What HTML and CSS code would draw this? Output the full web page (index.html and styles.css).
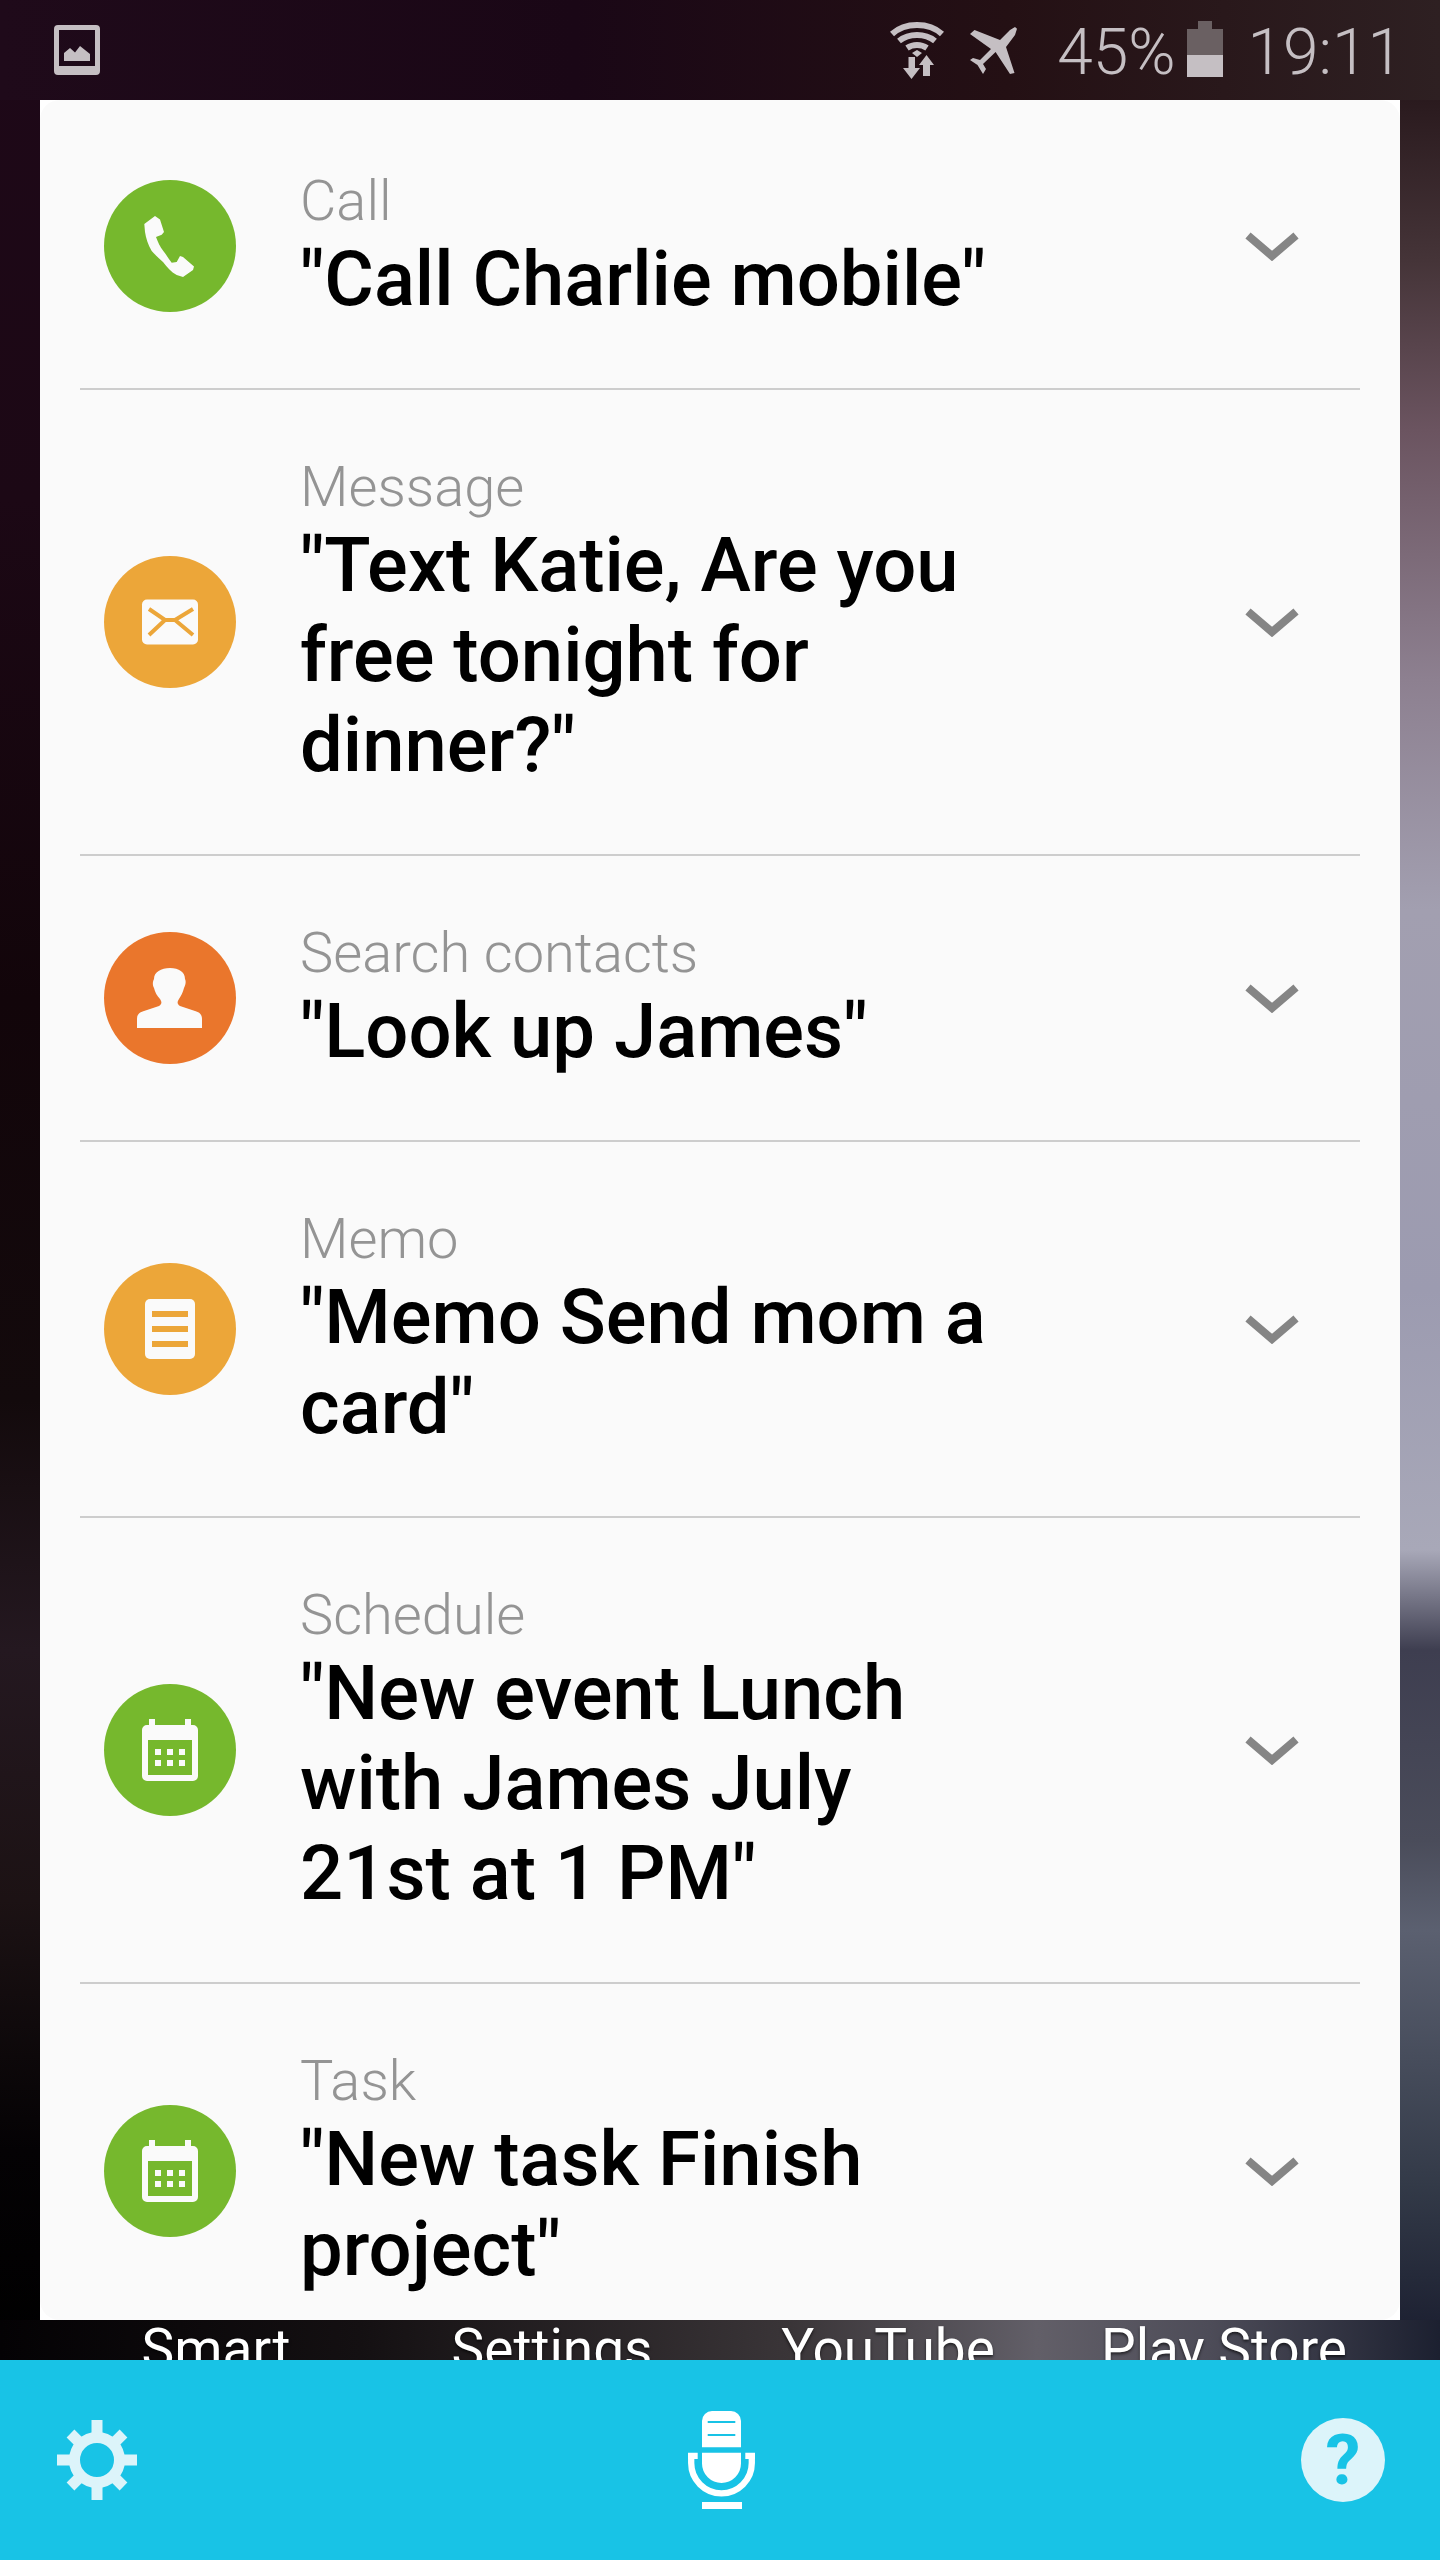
FILE: index.html
```html
<!DOCTYPE html>
<html lang="en">
<head>
    <meta charset="UTF-8">
    <meta name="viewport" content="width=device-width, initial-scale=1.0">
    <title>Voice commands</title>
    <link rel="stylesheet" href="styles.css">
</head>
<body>
    <svg class="defs" width="0" height="0">
        <symbol id="calendar" viewBox="0 0 132 132">
            <path fill="#fafafa" d="M45 35h6v6h30v-6h6v6h2a5 5 0 0 1 5 5v46a5 5 0 0 1-5 5H43a5 5 0 0 1-5-5V46a5 5 0 0 1 5-5h2z"/>
            <rect x="44" y="56" width="44" height="35" fill="#76b82d"/>
            <path fill="#fafafa" d="M51 65h6v6h-6zM63 65h6v6h-6zM75 65h6v6h-6zM51 76h6v6h-6zM63 76h6v6h-6zM75 76h6v6h-6z"/>
        </symbol>
        <symbol id="chevron" viewBox="0 0 54 29">
            <path d="M3 3.500 27 24 51 3.500" fill="none" stroke="#858585" stroke-width="8"/>
        </symbol>
    </svg>

    <div class="screen">
        <div class="status-bar">
            <svg class="status-image" width="46" height="50" viewBox="0 0 46 50">
                <path fill="#c5bfc3" fill-rule="evenodd" d="M4 0h38a4 4 0 0 1 4 4v42a4 4 0 0 1-4 4H4a4 4 0 0 1-4-4V4a4 4 0 0 1 4-4zM5 5v36h36V5z"/>
                <path fill="#c5bfc3" d="M10 36v-8l6-5 5 4.500 5-6.500 10 8v7z"/>
            </svg>
            <div class="status-right">
                <svg class="wifi" width="54" height="60" viewBox="0 0 54 60">
                    <path fill="none" stroke="#c5bfc3" stroke-width="6" d="M2 14C15 2 39 2 52 14M9 21c10-8 26-8 36 0M17 28c6-4 14-4 20 0"/>
                    <path fill="#c5bfc3" d="M22 33l5-3 5 3-5 4zM18.500 37H25v11h5l-8.500 11L13 48h5.500zM33 56V45h-4l7.500-10L44 45h-4v11z"/>
                </svg>
                <svg class="plane" width="48" height="48" viewBox="0 0 48 48">
                    <path fill="#c5bfc3" d="M48 1.700 46 8 37 20 45.500 46 41 47 26.600 25 14 37 17 42 14 47 8.500 38 1 33 4 31 11 33 22 22 1 7 5.500 3 31 13 41 3 46 0z"/>
                </svg>
                <span class="percent">45%</span>
                <svg class="battery" width="36" height="56" viewBox="0 0 36 56">
                    <path fill="#6a6062" d="M11 0h14v8h11v26H0V8h11z"/>
                    <rect y="34" width="36" height="22" fill="#c5bfc3"/>
                </svg>
                <span class="clock">19:11</span>
            </div>
        </div>

        <div class="card">
            <div class="row">
                <svg class="row-icon" viewBox="0 0 132 132">
                    <circle cx="66" cy="66" r="66" fill="#76b82d"/>
                    <path fill="#fafafa" d="M51 36l5 3.500L60 52l-2.300 2.800L52 57c2 5 4 10 7.300 14s5.400 8 8.400 11.700l5-.700L76 76l3 1 11 9.600L89 90l-10 6.900L72.700 95C67 92 63 87 59 82 55 78 51 75 47.700 71 44 65 42 58 41 52l-.700-8z"/>
                </svg>
                <div class="row-text">
                    <div class="row-label">Call</div>
                    <div class="row-command">"Call Charlie mobile"</div>
                </div>
                <svg class="chevron"><use href="#chevron"/></svg>
            </div>

            <div class="row">
                <svg class="row-icon" viewBox="0 0 132 132">
                    <circle cx="66" cy="66" r="66" fill="#eca639"/>
                    <rect x="38" y="43.500" width="56" height="45" rx="5" fill="#fafafa"/>
                    <path fill="none" stroke="#eca639" stroke-width="4" d="M45 53l16 11h10l18-11M45 79l16-15M71 64l18 15"/>
                </svg>
                <div class="row-text">
                    <div class="row-label">Message</div>
                    <div class="row-command">"Text Katie, Are you free tonight for dinner?"</div>
                </div>
                <svg class="chevron"><use href="#chevron"/></svg>
            </div>

            <div class="row">
                <svg class="row-icon" viewBox="0 0 132 132">
                    <circle cx="66" cy="66" r="66" fill="#ea762c"/>
                    <path fill="#fafafa" d="M33 96v-9c0-5 3-7 7-8l15-5c3-2 3-4 1-7-3-3-5-7-6-11-2-4-1-7 0-9 0-7 7-11 16-11s15 4 15 11c1 2 1 5-1 9-1 4-3 8-5 11-2 3-2 5 1 7l15 5c4 1 7 3 7 8v9z"/>
                </svg>
                <div class="row-text">
                    <div class="row-label">Search contacts</div>
                    <div class="row-command">"Look up James"</div>
                </div>
                <svg class="chevron"><use href="#chevron"/></svg>
            </div>

            <div class="row">
                <svg class="row-icon" viewBox="0 0 132 132">
                    <circle cx="66" cy="66" r="66" fill="#eca639"/>
                    <rect x="41" y="36" width="50" height="60" rx="5" fill="#fafafa"/>
                    <path fill="#eca639" d="M48 48h36v6H48zM48 63h36v6H48zM48 78h36v6H48z"/>
                </svg>
                <div class="row-text">
                    <div class="row-label">Memo</div>
                    <div class="row-command">"Memo Send mom a card"</div>
                </div>
                <svg class="chevron"><use href="#chevron"/></svg>
            </div>

            <div class="row">
                <svg class="row-icon" viewBox="0 0 132 132">
                    <circle cx="66" cy="66" r="66" fill="#76b82d"/>
                    <use href="#calendar" width="132" height="132"/>
                </svg>
                <div class="row-text">
                    <div class="row-label">Schedule</div>
                    <div class="row-command">"New event Lunch with James July 21st at 1 PM"</div>
                </div>
                <svg class="chevron"><use href="#chevron"/></svg>
            </div>

            <div class="row">
                <svg class="row-icon" viewBox="0 0 132 132">
                    <circle cx="66" cy="66" r="66" fill="#76b82d"/>
                    <use href="#calendar" width="132" height="132"/>
                </svg>
                <div class="row-text">
                    <div class="row-label">Task</div>
                    <div class="row-command">"New task Finish project"</div>
                </div>
                <svg class="chevron"><use href="#chevron"/></svg>
            </div>
        </div>

        <div class="home-labels">
            <span>Smart</span>
            <span>Settings</span>
            <span>YouTube</span>
            <span>Play Store</span>
        </div>

        <div class="bottom-bar">
            <svg class="gear" width="80" height="80" viewBox="0 0 80 80">
                <g fill="none" stroke="#dcf4fa" stroke-width="11">
                    <circle cx="40" cy="40" r="22.500"/>
                    <path d="M40 0v14M40 66v14M0 40h14M66 40h14M13.500 13.500l10 10M56.500 56.500l10 10M66.500 13.500l-10 10M23.500 56.500l-10 10"/>
                </g>
            </svg>
            <svg class="mic" width="67" height="98" viewBox="0 0 67 98">
                <path fill="#fff" fill-rule="evenodd" d="M24 0h19a10 10 0 0 1 10 10v26.300H14V10A10 10 0 0 1 24 0zM19.700 10v2h27.600v-2zM19.700 23v2h27.600v-2z"/>
                <path fill="#fff" d="M14 41.700h39V52.500a19.500 19.500 0 0 1-39 0z"/>
                <path fill="none" stroke="#fff" stroke-width="6.300" d="M0 44.900h9.700M57.300 44.900H67M3.200 44.900V52a30.300 30.300 0 0 0 60.600 0v-7.100"/>
                <rect x="14" y="91" width="40" height="7" fill="#fff"/>
            </svg>
            <div class="help">?</div>
        </div>
    </div>
</body>
</html>
```

FILE: styles.css
```css
/* Page and wallpaper */
html, body {
    margin: 0;
    padding: 0;
}

.defs {
    position: absolute;
}

.screen {
    width: 1440px;
    height: 2560px;
    display: flex;
    flex-direction: column;
    overflow: hidden;
    font-family: Roboto, 'Liberation Sans', sans-serif;
    background:
        linear-gradient(90deg, #1f0a1a 0%, #1a0716 40%, #241014 70%, #2e2022 100%) top / 100% 100px no-repeat,
        linear-gradient(90deg, #040204 0%, #141012 25%, #3a3538 55%, #625f68 72%, #4d4c58 84%, #1c2030 100%) 0 2320px / 100% 40px no-repeat,
        linear-gradient(180deg, #2a1a1e 100px, #453438 260px, #6b5460 430px, #8d8090 680px, #a29fb0 910px, #9c9bb0 1290px, #a8a8b8 1550px, #3e3e50 1650px, #4a4c5a 1840px, #5b6070 1930px, #333a48 2185px, #1e2233 2320px) right top / 40px 100% no-repeat,
        linear-gradient(180deg, #1e0818 0, #1c0815 500px, #12050a 1000px, #130a0c 1400px, #241820 1650px, #1c1214 1900px, #040204 2150px, #000 2360px) left top / 40px 100% no-repeat;
}

/* Status bar */
.status-bar {
    height: 100px;
    flex: none;
    display: flex;
    align-items: flex-start;
    justify-content: space-between;
    padding: 0 37px 0 54px;
    box-sizing: border-box;
    color: #c5bfc3;
}

.status-image {
    margin-top: 25px;
}

.status-right {
    display: flex;
    align-items: flex-start;
    font-size: 64px;
    font-weight: 300;
    line-height: 70px;
}

.wifi {
    margin-top: 20px;
}

.plane {
    margin: 27px 40px 0 25px;
}

.percent, .clock {
    margin-top: 18px;
}

.battery {
    margin: 21px 25px 0 11px;
}

/* Card with commands */
.card {
    flex: 1;
    margin: 0 40px;
    padding-top: 4px;
    background-color: #fafafa;
    border-radius: 20px;
    overflow: hidden;
}

.row {
    display: flex;
    align-items: center;
    margin: 0 40px;
    padding: 65px 61px 65px 24px;
    border-bottom: 2px solid #cdcdcd;
}

.row-icon {
    width: 132px;
    height: 132px;
    flex: none;
}

.row-text {
    width: 690px;
    margin: 2px 0 -2px 64px;
}

.row-label {
    font-size: 56px;
    font-weight: 300;
    line-height: 60px;
    color: #949494;
}

.row-command {
    margin: 3px 0 1px;
    font-size: 76px;
    font-weight: 500;
    line-height: 90px;
    color: #000;
}

.chevron {
    width: 54px;
    height: 29px;
    flex: none;
    margin-left: auto;
}

/* Home screen labels showing behind */
.home-labels {
    height: 40px;
    flex: none;
    display: grid;
    grid-template-columns: repeat(4, 336px);
    padding: 0 48px;
    overflow: hidden;
    font-size: 55px;
    line-height: 58px;
    text-align: center;
    color: #fff;
    text-shadow: 0 2px 3px rgba(0, 0, 0, 0.6);
}

/* Bottom bar */
.bottom-bar {
    height: 200px;
    flex: none;
    display: grid;
    grid-template-columns: 1fr auto 1fr;
    align-items: center;
    padding: 0 55px 0 57px;
    box-sizing: border-box;
    background-color: #18c3e6;
}

.help {
    width: 84px;
    height: 84px;
    justify-self: end;
    border-radius: 50%;
    background-color: #dcf4fa;
    color: #18c3e6;
    font-size: 70px;
    font-weight: 700;
    line-height: 84px;
    text-align: center;
}
```
